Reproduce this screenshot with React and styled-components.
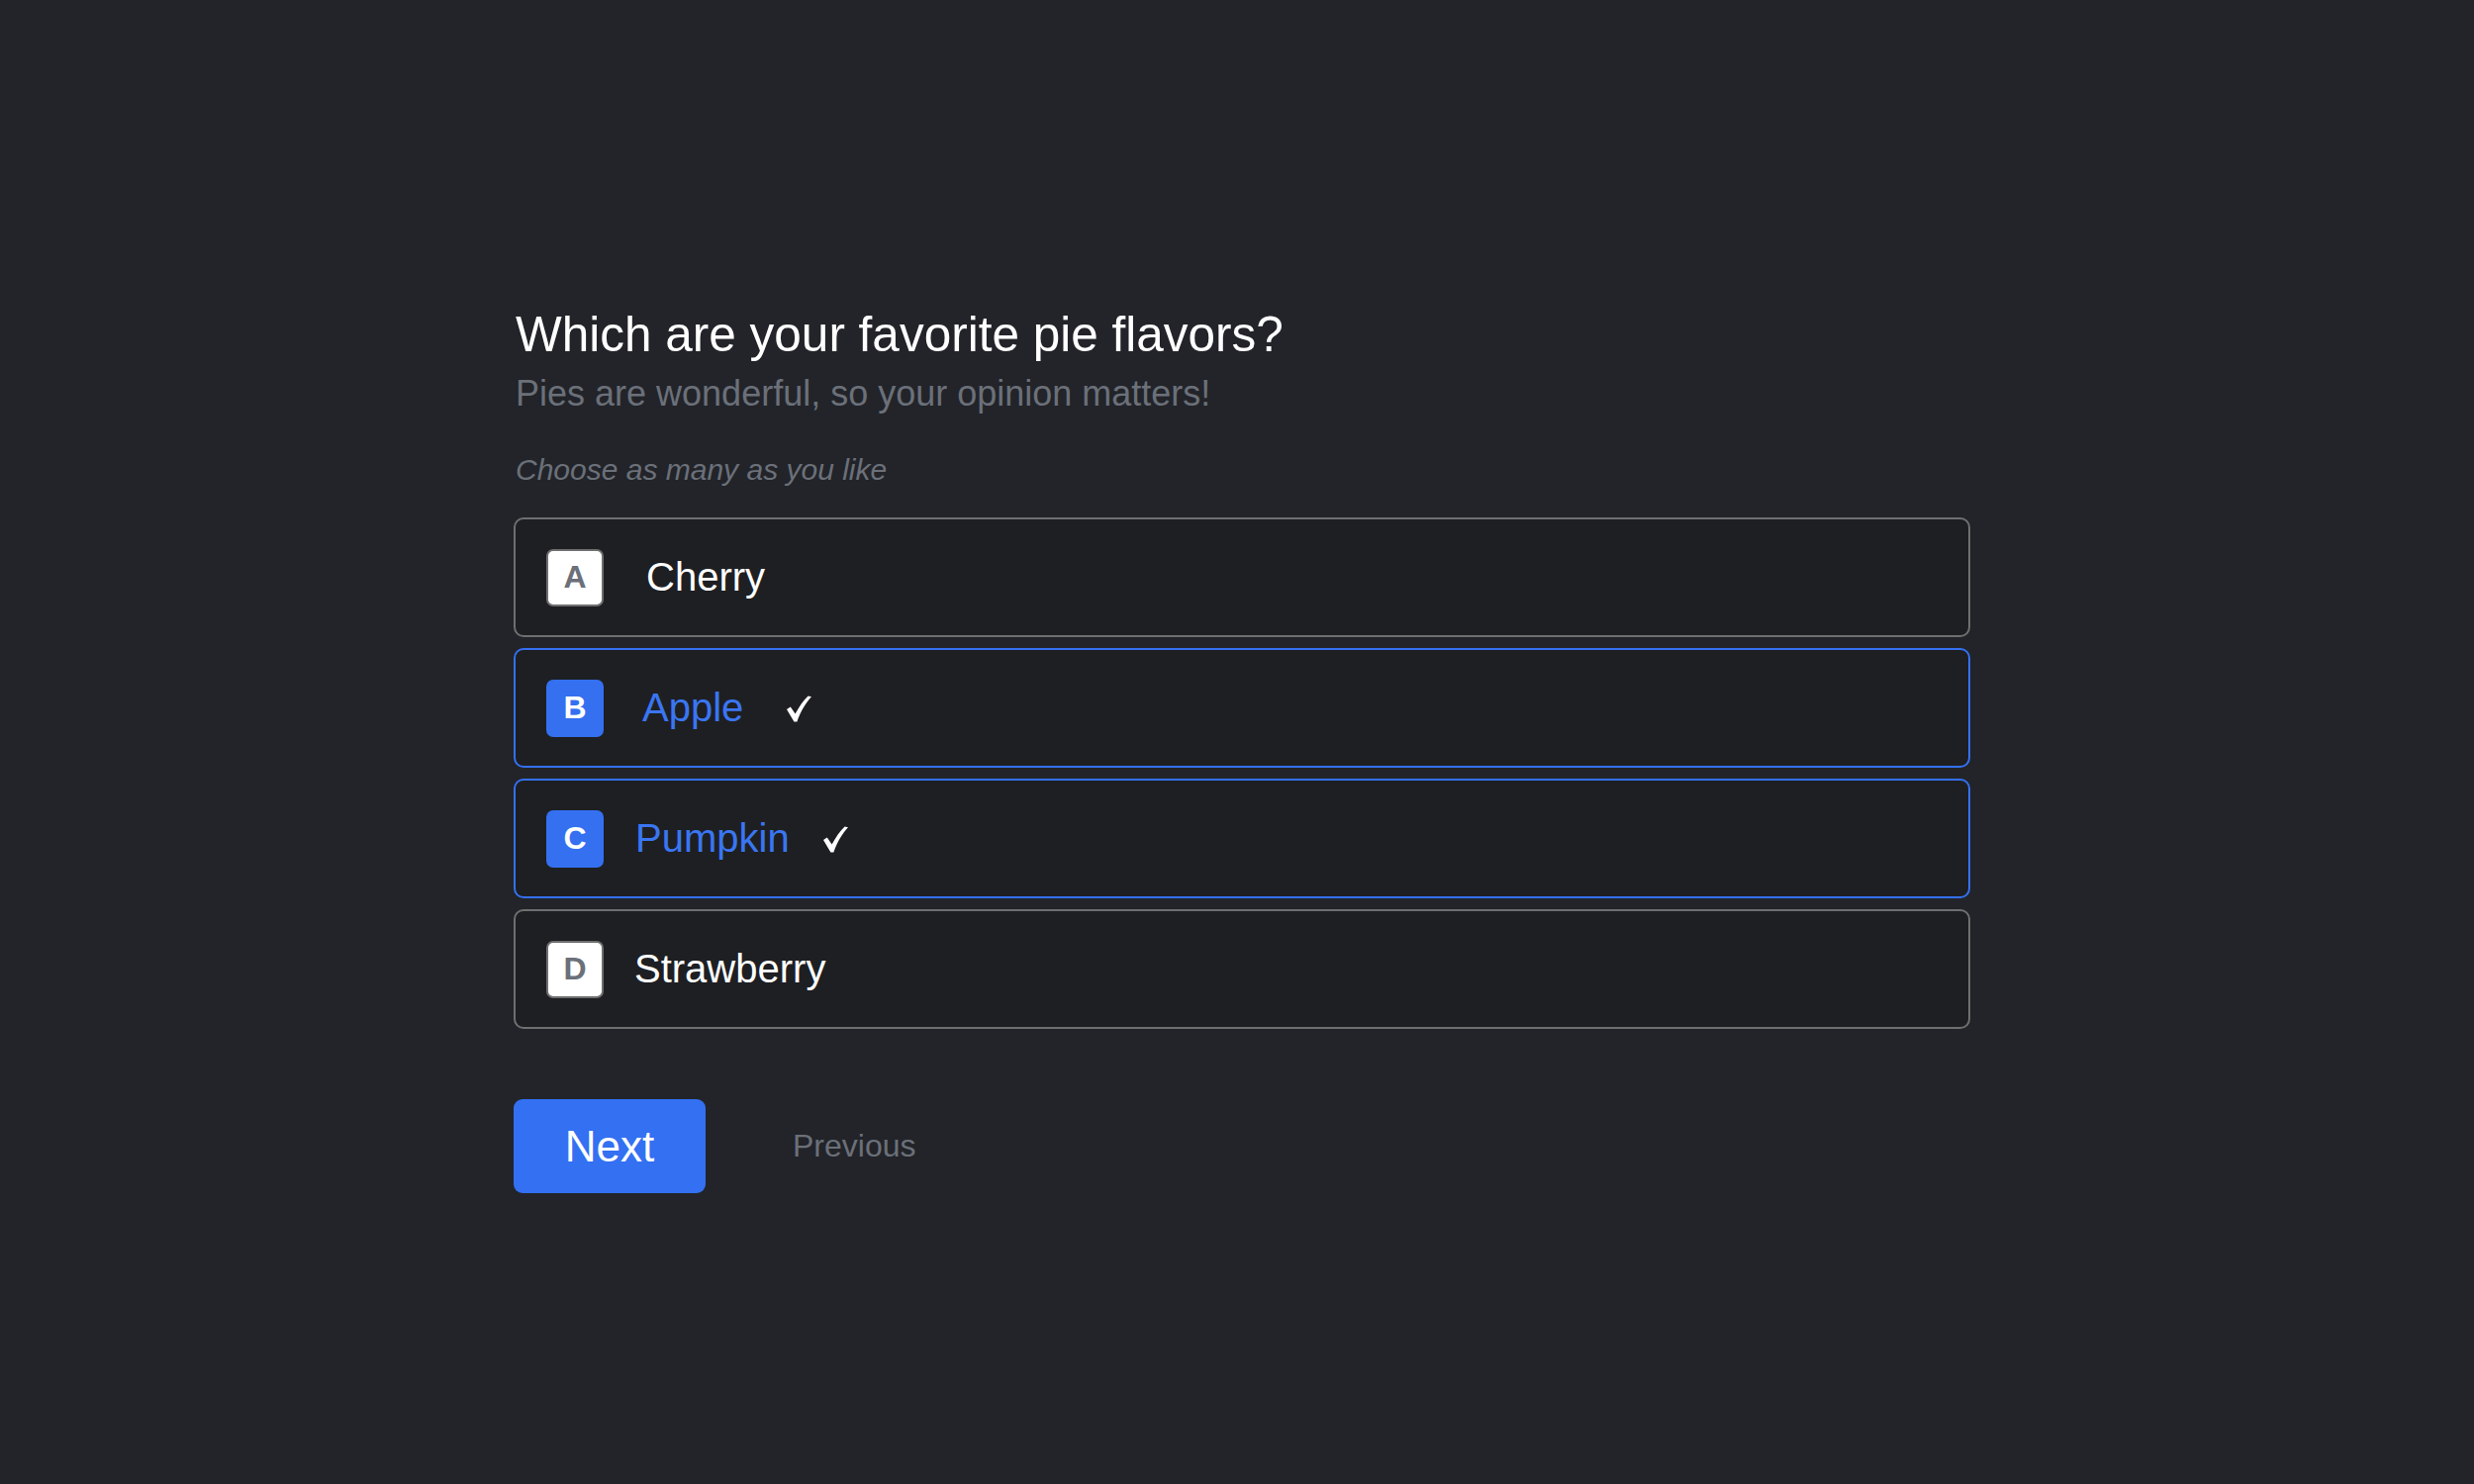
import { Component } from "react";
import styled, { createGlobalStyle } from "styled-components";

const GlobalStyle = createGlobalStyle`
  html, body {
    margin: 0;
    padding: 0;
    background: #222429;
  }
  body {
    font-family: "Liberation Sans", Arial, sans-serif;
    -webkit-font-smoothing: antialiased;
  }
`;

const OPTIONS = [
  { key: "A", label: "Cherry", selected: false, indent: 43, tick: 0 },
  { key: "B", label: "Apple", selected: true, indent: 39, tick: 44 },
  { key: "C", label: "Pumpkin", selected: true, indent: 32, tick: 34 },
  { key: "D", label: "Strawberry", selected: false, indent: 31, tick: 0 },
];

const Check = () => (
  <svg width="25" height="27" viewBox="0 0 25 27">
    <path
      d="M0 14 L3.8 11.4 L8.6 18.4 C12.4 11.4 16.8 5 21.6 0.4 L25 1.2 C19 7.8 13.8 16 10.4 26.6 L7.4 26.6 Z"
      fill="#ffffff"
    />
  </svg>
);

export default class App extends Component {
  constructor() {
    super();
    this.state = {
      options: OPTIONS,
    };
    this.toggle = this.toggle.bind(this);
  }

  toggle(key) {
    this.setState({
      options: this.state.options.map((o) =>
        o.key === key ? { ...o, selected: !o.selected, tick: o.tick || 38 } : o
      ),
    });
  }

  render() {
    return (
      <>
        <GlobalStyle />
        <PageS>
          <QuestionS>
            <TitleS>Which are your favorite pie flavors?</TitleS>
            <SubtitleS>Pies are wonderful, so your opinion matters!</SubtitleS>
            <HintS>Choose as many as you like</HintS>

            <ListS>
              {this.state.options.map((o) => (
                <OptionS
                  key={o.key}
                  $selected={o.selected}
                  onClick={() => this.toggle(o.key)}
                >
                  <BadgeS $selected={o.selected}>{o.key}</BadgeS>
                  <LabelS $selected={o.selected} $indent={o.indent}>
                    {o.label}
                  </LabelS>
                  {o.selected && (
                    <TickS $gap={o.tick}>
                      <Check />
                    </TickS>
                  )}
                </OptionS>
              ))}
            </ListS>

            <ActionsS>
              <NextS>Next</NextS>
              <PreviousS>Previous</PreviousS>
            </ActionsS>
          </QuestionS>
        </PageS>
      </>
    );
  }
}

const PageS = styled.div`
  min-height: 1500px;
  box-sizing: border-box;
  padding: 309px 0 0 519px;
  background: #222429;
`;

const QuestionS = styled.div`
  width: 1472px;
  display: flex;
  flex-direction: column;
`;

const TitleS = styled.h1`
  margin: 0 0 10px 2px;
  font-size: 49.5px;
  line-height: 58px;
  font-weight: 400;
  color: #ffffff;
`;

const SubtitleS = styled.p`
  margin: 0 0 39px 2px;
  font-size: 36px;
  line-height: 42px;
  color: #6b7079;
`;

const HintS = styled.p`
  margin: 0 0 31px 2px;
  font-size: 30px;
  line-height: 34px;
  font-style: italic;
  color: #6b7079;
`;

const ListS = styled.div`
  display: flex;
  flex-direction: column;
  gap: 11px;
`;

const OptionS = styled.div`
  height: 121px;
  box-sizing: border-box;
  display: flex;
  align-items: center;
  padding-left: 31px;
  border: 2px solid ${(p) => (p.$selected ? "#3470f0" : "#6f6f70")};
  border-radius: 10px;
  background: #1e1f23;
  cursor: pointer;
`;

const BadgeS = styled.div`
  width: 58px;
  height: 58px;
  box-sizing: border-box;
  display: flex;
  align-items: center;
  justify-content: center;
  border-radius: 7px;
  border: 2px solid ${(p) => (p.$selected ? "#3470f0" : "#6f6f70")};
  background: ${(p) => (p.$selected ? "#3470f0" : "#ffffff")};
  color: ${(p) => (p.$selected ? "#ffffff" : "#6b7079")};
  font-size: 32px;
  font-weight: 700;
`;

const LabelS = styled.span`
  margin-left: ${(p) => p.$indent}px;
  font-size: 40px;
  color: ${(p) => (p.$selected ? "#3a76f2" : "#ffffff")};
`;

const TickS = styled.span`
  display: flex;
  margin-left: ${(p) => p.$gap}px;
  margin-top: 2px;
`;

const ActionsS = styled.div`
  display: flex;
  align-items: center;
  gap: 88px;
  margin-top: 71px;
`;

const NextS = styled.button`
  width: 194px;
  height: 95px;
  border: none;
  border-radius: 9px;
  background: #3370f2;
  color: #ffffff;
  font-family: inherit;
  font-size: 44px;
  padding: 0;
  cursor: pointer;
`;

const PreviousS = styled.button`
  border: none;
  background: none;
  padding: 0;
  font-family: inherit;
  font-size: 32px;
  color: #6b7079;
  cursor: pointer;
`;
